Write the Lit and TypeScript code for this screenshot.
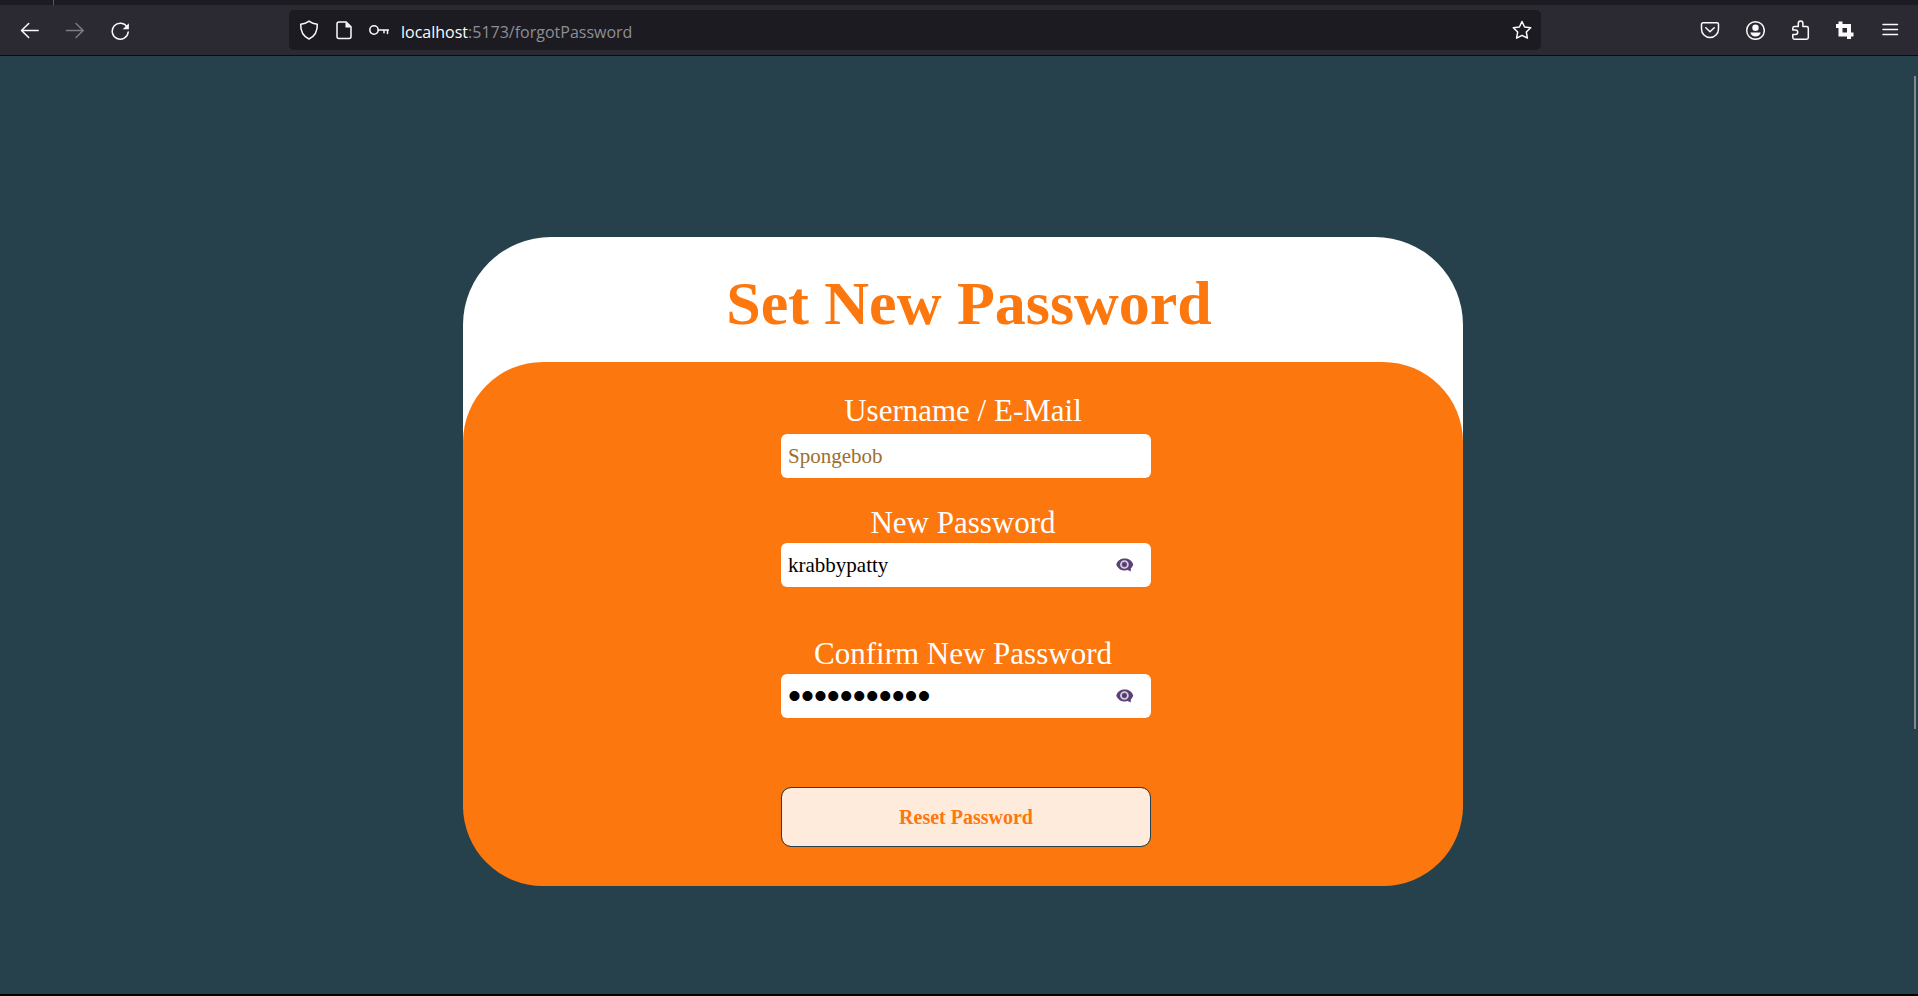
import { LitElement, html, css, svg } from "lit";
import { customElement, property, state } from "lit/decorators.js";

const icons = {
  back: svg`<path d="M18.200 10.500H1.700M8.700 3.500L1.500 10.500l7.200 7" />`,
  forward: svg`<path d="M1.500 10.500h16.500M11 3.500L18.200 10.500l-7.200 7" />`,
  reload: svg`<path d="M17.2 7.2A8 8 0 1 0 18.2 12" /><path class="solid" d="M18.9 3.2v6h-6.2z" />`,
  shield: svg`<path d="M10 1.2C7.8 3 4.9 3.9 1.7 4.3c-.2 6.800 1.600 11.700 8.300 14.700 6.700-3 8.500-7.900 8.300-14.700C15.100 3.900 12.200 3 10 1.200z" />`,
  page: svg`<path d="M5 2h7.200L17 6.800V16.500a2 2 0 0 1-2 2H5a2 2 0 0 1-2-2V4a2 2 0 0 1 2-2z" /><path class="solid" d="M11.500 2v5.500H17z" />`,
  key: svg`<circle cx="5" cy="10" r="4.200" /><path d="M9.200 10H19.500M18.500 10v3.600M15 10v2.800" />`,
  star: svg`<path d="M10 1.500l2.600 5.500 6.100.8-4.400 4.200 1.100 6.100L10 15.300 4.600 18.100l1.100-6.100L1.300 7.800l6.100-.8z" />`,
  pocket: svg`<path d="M3 2.800h14a1.500 1.500 0 0 1 1.500 1.500V9a8.500 8.500 0 0 1-17 0V4.300A1.500 1.500 0 0 1 3 2.800z" /><path d="M5.800 7.800L10 11.800l4.200-4" />`,
  account: svg`<circle cx="10.500" cy="10.500" r="8.800" /><circle class="solid" cx="10.500" cy="7.800" r="3.200" /><path class="solid" d="M5.300 12.600h10.400c-.6 2.500-2.600 3.900-5.200 3.900s-4.600-1.400-5.200-3.900z" />`,
  puzzle: svg`<path d="M4.300 6.500H8.300V3.400a2.300 2.300 0 0 1 4.600 0V6.500H16.600a1.700 1.700 0 0 1 1.700 1.700V17.500a1.700 1.700 0 0 1-1.700 1.700H4.500A1.700 1.700 0 0 1 2.800 17.500V14.500H5.500a2.200 2.200 0 0 0 0-4.400H2.800V8.200A1.700 1.700 0 0 1 4.300 6.500z" />`,
  crop: svg`<path class="solid" fill-rule="evenodd" d="M3.500 1.500h4v2.500h8.500v8.500h2.500v4h-2.500V19h-4v-2.500H3.500V8H1V4h2.500zM7.500 8v4.500H12V8z" />`,
  menu: svg`<path d="M3 4.500h14.500M3 9.500h14.500M3 14.500h14.500" />`,
};

const glyph = (name: keyof typeof icons) =>
  html`<svg class="glyph" viewBox="0 0 20 20" aria-hidden="true">${icons[name]}</svg>`;

@customElement("browser-bar")
class BrowserBar extends LitElement {
  static styles = css`
    :host {
      display: block;
      font-family: "Open Sans", "Noto Sans", sans-serif;
    }
    .tabs {
      height: 5px;
      padding-left: 53px;
      background: #1c1b22;
    }
    .divider {
      width: 1px;
      height: 5px;
      background: #5b5a62;
    }
    .toolbar {
      display: flex;
      align-items: center;
      height: 50px;
      padding: 0 6px 0 8px;
      background: #2b2a33;
      border-bottom: 1px solid #0c0c0d;
    }
    .group {
      display: flex;
      gap: 1px;
    }
    button {
      display: flex;
      align-items: center;
      justify-content: center;
      width: 44px;
      height: 40px;
      padding: 0;
      border: 0;
      background: none;
      color: #fbfbfe;
    }
    button:disabled {
      color: #7d7c83;
    }
    .address {
      display: flex;
      flex: 1;
      align-items: center;
      height: 40px;
      margin: 0 147px;
      padding: 0 2px 0 3px;
      box-sizing: border-box;
      border-radius: 5px;
      background: #1c1b22;
    }
    .address button {
      width: 34px;
    }
    .url {
      flex: 1;
      padding: 3px 0 0 5px;
      font-size: 16px;
      line-height: 24px;
      color: #8e8d93;
      white-space: nowrap;
    }
    .host {
      color: #fbfbfe;
    }
    .glyph {
      width: 20px;
      height: 20px;
      fill: none;
      stroke: currentColor;
      stroke-width: 1.5;
      stroke-linecap: round;
      stroke-linejoin: round;
    }
    .solid {
      fill: currentColor;
      stroke: none;
    }
  `;

  render() {
    return html`
      <div class="tabs"><div class="divider"></div></div>
      <div class="toolbar">
        <nav class="group" aria-label="History">
          <button aria-label="Back">${glyph("back")}</button>
          <button aria-label="Forward" disabled>${glyph("forward")}</button>
          <button aria-label="Reload">${glyph("reload")}</button>
        </nav>
        <div class="address">
          <div class="group">
            <button aria-label="Tracking protection">${glyph("shield")}</button>
            <button aria-label="Site information">${glyph("page")}</button>
            <button aria-label="Saved logins">${glyph("key")}</button>
          </div>
          <div class="url"><span class="host">localhost</span>:5173/forgotPassword</div>
          <button aria-label="Bookmark">${glyph("star")}</button>
        </div>
        <div class="group">
          <button aria-label="Pocket">${glyph("pocket")}</button>
          <button aria-label="Account">${glyph("account")}</button>
          <button aria-label="Extensions">${glyph("puzzle")}</button>
          <button aria-label="Crop">${glyph("crop")}</button>
          <button aria-label="Menu">${glyph("menu")}</button>
        </div>
      </div>
    `;
  }
}

@customElement("password-field")
class PasswordField extends LitElement {
  @property() label = "";
  @property() value = "";
  @property({ type: Boolean }) visible = false;

  static styles = css`
    :host {
      display: flex;
      flex-direction: column;
      gap: 2px;
      padding-bottom: 22px;
    }
    label {
      font-size: 31px;
      line-height: 36px;
      text-align: center;
      color: #fff;
    }
    .box {
      display: flex;
      align-items: center;
      width: 370px;
      height: 44px;
      margin-left: 6px;
      align-self: center;
      border-radius: 6px;
      background: #fff;
    }
    input {
      flex: 1;
      min-width: 0;
      height: 44px;
      box-sizing: border-box;
      padding: 0 7px;
      border: 0;
      outline: 0;
      background: none;
      color: #000;
      font: 21px "Liberation Serif", "Times New Roman", serif;
    }
    input[type="password"] {
      font: 37px "Liberation Sans", Arial, sans-serif;
    }
    button {
      display: flex;
      align-items: center;
      justify-content: center;
      width: 34px;
      height: 34px;
      margin-right: 9px;
      padding: 0;
      border: 0;
      background: none;
    }
    svg {
      width: 18px;
      height: 14px;
    }
  `;

  render() {
    return html`
      <label for="secret">${this.label}</label>
      <div class="box">
        <input id="secret" type=${this.visible ? "text" : "password"} .value=${this.value} />
        <button
          type="button"
          aria-label="Toggle password visibility"
          @click=${() => (this.visible = !this.visible)}
        >
          <svg viewBox="0 0 18 14" aria-hidden="true">
            <path
              fill="#5b4078"
              d="M.3 6.500C1.600 2.600 4.900.6 8.700.6s7.200 2 8.500 5.900c-.3 1.500-1.100 2.800-2.300 3.800l-.2 3.300-2.900-1.600c-1 .3-2 .5-3.100.5C4.900 12.500 1.600 10.400.3 6.500z"
            />
            <circle cx="8.400" cy="6.500" r="3.500" fill="#66517f" stroke="#d9d2e0" stroke-width="1.700" />
            <circle cx="8.400" cy="6.500" r="1.500" fill="#4d3a66" />
          </svg>
        </button>
      </div>
    `;
  }
}

@customElement("app-root")
class AppRoot extends LitElement {
  @state() private username = "";

  static styles = css`
    :host {
      display: flex;
      flex-direction: column;
      min-height: 100vh;
      box-sizing: border-box;
      position: relative;
      border-bottom: 2px solid #000;
      background: #26414b;
      font-family: "Liberation Serif", "Times New Roman", serif;
    }
    main {
      display: flex;
      justify-content: center;
      padding: 181px 0 40px 8px;
    }
    .card {
      width: 100%;
      max-width: 1000px;
      border-radius: 88px;
      background: #fff;
    }
    h1 {
      margin: 0;
      padding: 31px 0 24px 12px;
      font-size: 62px;
      line-height: 70px;
      text-align: center;
      color: #fc770d;
    }
    form {
      display: flex;
      flex-direction: column;
      gap: 27px;
      padding: 31px 0 39px;
      border-radius: 80px;
      background: #fc770d;
    }
    .field {
      display: flex;
      flex-direction: column;
      gap: 5px;
    }
    label {
      font-size: 31px;
      line-height: 36px;
      text-align: center;
      color: #fff;
    }
    input {
      align-self: center;
      width: 370px;
      height: 44px;
      box-sizing: border-box;
      margin: 0 0 0 6px;
      padding: 0 7px;
      border: 0;
      border-radius: 6px;
      outline: 0;
      background: #fff;
      color: #000;
      font: 21px "Liberation Serif", "Times New Roman", serif;
    }
    input::placeholder {
      color: #9a7030;
      opacity: 1;
    }
    .submit {
      align-self: center;
      width: 370px;
      height: 60px;
      margin: 20px 0 0 6px;
      border: 1px solid #26414b;
      border-radius: 10px;
      background: #ffebdc;
      background-clip: padding-box;
      color: #fc770d;
      font: bold 20px "Liberation Serif", "Times New Roman", serif;
    }
    .thumb {
      position: absolute;
      top: 76px;
      right: 2px;
      width: 2px;
      height: 653px;
      background: #87868a;
    }
  `;

  render() {
    return html`
      <browser-bar></browser-bar>
      <main>
        <section class="card">
          <h1>Set New Password</h1>
          <form @submit=${(e: Event) => e.preventDefault()}>
            <div class="field">
              <label for="username">Username / E-Mail</label>
              <input
                id="username"
                type="text"
                placeholder="Spongebob"
                .value=${this.username}
                @input=${(e: Event) => (this.username = (e.target as HTMLInputElement).value)}
              />
            </div>
            <password-field label="New Password" value="krabbypatty" visible></password-field>
            <password-field label="Confirm New Password" value="krabbypatty"></password-field>
            <button class="submit">Reset Password</button>
          </form>
        </section>
      </main>
      <div class="thumb"></div>
    `;
  }
}
